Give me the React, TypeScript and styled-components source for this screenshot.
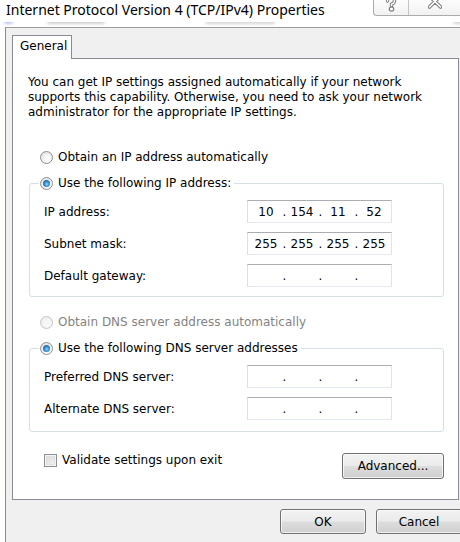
import styled, { createGlobalStyle } from 'styled-components';

const GlobalStyle = createGlobalStyle`
  html, body {
    margin: 0;
    padding: 0;
    background: #fff;
    overflow: hidden;
  }
`;

const uiFont = `'DejaVu Sans', Tahoma, sans-serif`;

type Address = string[] | null;

// smudges of the window behind the dialog, blurred out in the screenshot
const smudges = [
  { x: 4, w: 9, c: '#b8c4ee' },
  { x: 34, w: 58, c: '#cfcfcf' },
  { x: 100, w: 70, c: '#d6d6d6' },
  { x: 178, w: 64, c: '#d2d2d2' },
];

function IpField({ value }: { value: Address }) {
  const parts = value ?? ['', '', '', ''];
  return (
    <IpBox>
      {parts.map((p, i) => (
        <IpPart key={i}>
          <Octet>{p}</Octet>
          {i < 3 && <Dot>.</Dot>}
        </IpPart>
      ))}
    </IpBox>
  );
}

function Option({
  label,
  checked,
  disabled,
  indent,
}: {
  label: string;
  checked?: boolean;
  disabled?: boolean;
  indent?: number;
}) {
  return (
    <RadioRow $indent={indent ?? 0} $disabled={!!disabled}>
      <Radio $checked={!!checked} $disabled={!!disabled} />
      <span>{label}</span>
    </RadioRow>
  );
}

function HelpGlyph() {
  return (
    <svg width="12" height="16" viewBox="0 0 12 16">
      <g fill="none" strokeLinecap="round" strokeLinejoin="round">
        <path d="M2.5 4 Q2.5 0.5 6 0.5 Q9.5 0.5 9.5 3.8 Q9.5 6.2 6.5 7.2 L6.5 8.5" stroke="#7c7c7c" strokeWidth="3.4" />
        <circle cx="6.5" cy="12" r="1.6" stroke="#7c7c7c" strokeWidth="2.4" />
        <path d="M2.5 4 Q2.5 0.5 6 0.5 Q9.5 0.5 9.5 3.8 Q9.5 6.2 6.5 7.2 L6.5 8.5" stroke="#fff" strokeWidth="1.4" />
        <circle cx="6.5" cy="12" r="1.6" fill="#fff" />
      </g>
    </svg>
  );
}

function CloseGlyph() {
  return (
    <svg width="14" height="13" viewBox="0 0 14 13">
      <g strokeLinecap="round">
        <path d="M1.5 -1 L12.5 10 M12.5 -1 L1.5 10" stroke="#7c7c7c" strokeWidth="3.6" />
        <path d="M1.5 -1 L12.5 10 M12.5 -1 L1.5 10" stroke="#fff" strokeWidth="1.6" />
      </g>
    </svg>
  );
}

export default function App() {
  return (
    <Window>
      <GlobalStyle />
      <TitleBar>
        <Title>Internet Protocol Version 4 (TCP/IPv4) Properties</Title>
        <Caption>
          <CaptionCell $w={34}>
            <HelpGlyph />
          </CaptionCell>
          <CaptionCell $w={52} $divider>
            <CloseGlyph />
          </CaptionCell>
        </Caption>
      </TitleBar>
      <BlurStrip>
        {smudges.map((s, i) => (
          <Smudge key={i} style={{ marginLeft: s.x, width: s.w, background: s.c }} />
        ))}
      </BlurStrip>

      <Frame>
        <TabStrip>
          <Tab>General</Tab>
        </TabStrip>
        <Panel>
          <Intro>
            You can get IP settings assigned automatically if your network
            <br />
            supports this capability. Otherwise, you need to ask your network
            <br />
            administrator for the appropriate IP settings.
          </Intro>

          <Spacer $h={27} />
          <Option label="Obtain an IP address automatically" indent={12} />

          <Group $top={6} $bottom={9}>
            <Legend>
              <Option label="Use the following IP address:" checked />
            </Legend>
            <FieldRow>
              <FieldLabel>IP address:</FieldLabel>
              <IpField value={['10', '154', '11', '52']} />
            </FieldRow>
            <FieldRow>
              <FieldLabel>Subnet mask:</FieldLabel>
              <IpField value={['255', '255', '255', '255']} />
            </FieldRow>
            <FieldRow>
              <FieldLabel>Default gateway:</FieldLabel>
              <IpField value={null} />
            </FieldRow>
          </Group>

          <Spacer $h={15} />
          <Option label="Obtain DNS server address automatically" indent={12} disabled />

          <Group $top={6} $bottom={11}>
            <Legend>
              <Option label="Use the following DNS server addresses" checked />
            </Legend>
            <FieldRow>
              <FieldLabel>Preferred DNS server:</FieldLabel>
              <IpField value={null} />
            </FieldRow>
            <FieldRow>
              <FieldLabel>Alternate DNS server:</FieldLabel>
              <IpField value={null} />
            </FieldRow>
          </Group>

          <BottomRow>
            <CheckRow>
              <CheckBox />
              <span>Validate settings upon exit</span>
            </CheckRow>
            <Button $w={102} $h={26}>Advanced...</Button>
          </BottomRow>
        </Panel>

        <Footer>
          <Button $w={86} $h={25}>OK</Button>
          <Button $w={86} $h={25}>Cancel</Button>
        </Footer>
      </Frame>
    </Window>
  );
}

const Window = styled.div`
  width: 460px;
  height: 542px;
  overflow: hidden;
  display: flex;
  flex-direction: column;
  font-family: ${uiFont};
  font-size: 12px;
  color: #000;
  background: #fff;
`;

const TitleBar = styled.div`
  height: 22px;
  display: flex;
  justify-content: space-between;
  align-items: flex-start;
  flex-shrink: 0;
`;

const Title = styled.div`
  margin: 0 0 0 6px;
  font-family: 'Noto Sans', 'Open Sans', sans-serif;
  font-size: 14px;
  line-height: 19px;
  color: #000;
  white-space: nowrap;
`;

const Caption = styled.div`
  display: flex;
  height: 15px;
  margin-right: -1px;
  border: 1px solid #ababab;
  border-top: none;
  border-right: none;
  border-bottom-left-radius: 4px;
  background: linear-gradient(#fdfdfd, #f1f1f1);
  overflow: hidden;
`;

const CaptionCell = styled.div<{ $w: number; $divider?: boolean }>`
  width: ${(p) => p.$w}px;
  display: flex;
  justify-content: center;
  align-items: flex-start;
  border-left: ${(p) => (p.$divider ? '1px solid #c4c4c4' : 'none')};
  svg {
    margin-top: -3px;
  }
`;

const BlurStrip = styled.div`
  height: 5px;
  display: flex;
  align-items: flex-start;
  overflow: hidden;
  flex-shrink: 0;
`;

const Smudge = styled.div`
  height: 5px;
  margin-top: -3px;
  border-radius: 3px;
  filter: blur(1.5px);
  flex-shrink: 0;
`;

const Frame = styled.div`
  flex: 1;
  margin-left: 5px;
  border-top: 1px solid #9c9c9c;
  border-left: 1px solid #8a8a8a;
  background: #f0f0f0;
  padding: 7px 0 0 6px;
  display: flex;
  flex-direction: column;
`;

const TabStrip = styled.div`
  display: flex;
  height: 23px;
`;

const Tab = styled.div`
  position: relative;
  z-index: 1;
  width: 60px;
  height: 24px;
  box-sizing: border-box;
  padding-left: 7px;
  border: 1px solid #898c95;
  border-bottom: none;
  background: #fff;
  line-height: 21px;
`;

const Panel = styled.div`
  width: 447px;
  height: 442px;
  box-sizing: border-box;
  padding: 16px 14px 0 15px;
  border: 1px solid #898c95;
  background: #fff;
  display: flex;
  flex-direction: column;
`;

const Intro = styled.p`
  margin: 0;
  line-height: 15px;
  white-space: nowrap;
`;

const Spacer = styled.div<{ $h: number }>`
  height: ${(p) => p.$h}px;
  flex-shrink: 0;
`;

const RadioRow = styled.div<{ $indent: number; $disabled: boolean }>`
  display: flex;
  align-items: center;
  gap: 5px;
  height: 20px;
  margin-left: ${(p) => p.$indent}px;
  color: ${(p) => (p.$disabled ? '#838383' : '#000')};
  white-space: nowrap;
`;

const Radio = styled.span<{ $checked: boolean; $disabled: boolean }>`
  position: relative;
  width: 13px;
  height: 13px;
  box-sizing: border-box;
  border-radius: 50%;
  border: 1px solid ${(p) => (p.$disabled ? '#c4c4c4' : '#8e8f8f')};
  background: ${(p) =>
    p.$disabled
      ? 'radial-gradient(circle at 60% 65%, #f7f7f7 30%, #e8e8e8 100%)'
      : 'radial-gradient(circle at 60% 65%, #fafafa 25%, #d9d9d9 100%)'};
  flex-shrink: 0;
  &::after {
    content: '';
    display: ${(p) => (p.$checked ? 'block' : 'none')};
    position: absolute;
    left: 2px;
    top: 2px;
    width: 7px;
    height: 7px;
    border-radius: 50%;
    background: radial-gradient(circle at 55% 60%, #8fd4ff 0%, #3a8fd0 40%, #0f3e6e 100%);
  }
`;

const Group = styled.fieldset<{ $top: number; $bottom: number }>`
  margin: ${(p) => p.$top}px 0 0 1px;
  padding: 7px 0 ${(p) => p.$bottom}px 14px;
  min-width: 0;
  border: 1px solid #d5dfe5;
  border-radius: 3px;
  display: flex;
  flex-direction: column;
  gap: 9px;
`;

const Legend = styled.legend`
  margin-left: -5px;
  padding: 0 3px 0 1px;
`;

const FieldRow = styled.div`
  display: grid;
  grid-template-columns: 203px 145px;
  align-items: center;
  height: 23px;
`;

const FieldLabel = styled.span`
  white-space: nowrap;
`;

const IpBox = styled.div`
  height: 23px;
  box-sizing: border-box;
  border: 1px solid;
  border-color: #abadb3 #e2e3ea #e3e9ef #dbdfe6;
  background: #fff;
  display: flex;
  align-items: center;
  padding-left: 4px;
`;

const IpPart = styled.div`
  display: flex;
`;

const Octet = styled.span`
  width: 28px;
  text-align: center;
`;

const Dot = styled.span`
  width: 7px;
  text-align: center;
  padding-left: 1px;
`;

const BottomRow = styled.div`
  margin-top: 21px;
  display: flex;
  justify-content: space-between;
  align-items: flex-start;
`;

const CheckRow = styled.div`
  display: flex;
  align-items: center;
  gap: 5px;
  height: 14px;
  margin-left: 16px;
  white-space: nowrap;
`;

const CheckBox = styled.span`
  width: 13px;
  height: 13px;
  box-sizing: border-box;
  border: 1px solid #8e8f8f;
  background: #fff;
  box-shadow: inset 0 0 0 1px #f4f4f4, inset 0 0 0 2px #e0e0e0;
  background-image: linear-gradient(135deg, #d6d6d6, #f6f6f6);
  flex-shrink: 0;
`;

const Button = styled.div<{ $w: number; $h: number }>`
  width: ${(p) => p.$w}px;
  height: ${(p) => p.$h}px;
  box-sizing: border-box;
  border: 1px solid #707070;
  border-radius: 3px;
  background: linear-gradient(#f2f2f2 0%, #ebebeb 48%, #dddddd 52%, #cfcfcf 100%);
  box-shadow: inset 0 0 0 1px rgba(255, 255, 255, 0.7);
  display: flex;
  align-items: center;
  justify-content: center;
  flex-shrink: 0;
`;

const Footer = styled.div`
  margin: 9px -2px 0 0;
  display: flex;
  justify-content: flex-end;
  gap: 10px;
`;
